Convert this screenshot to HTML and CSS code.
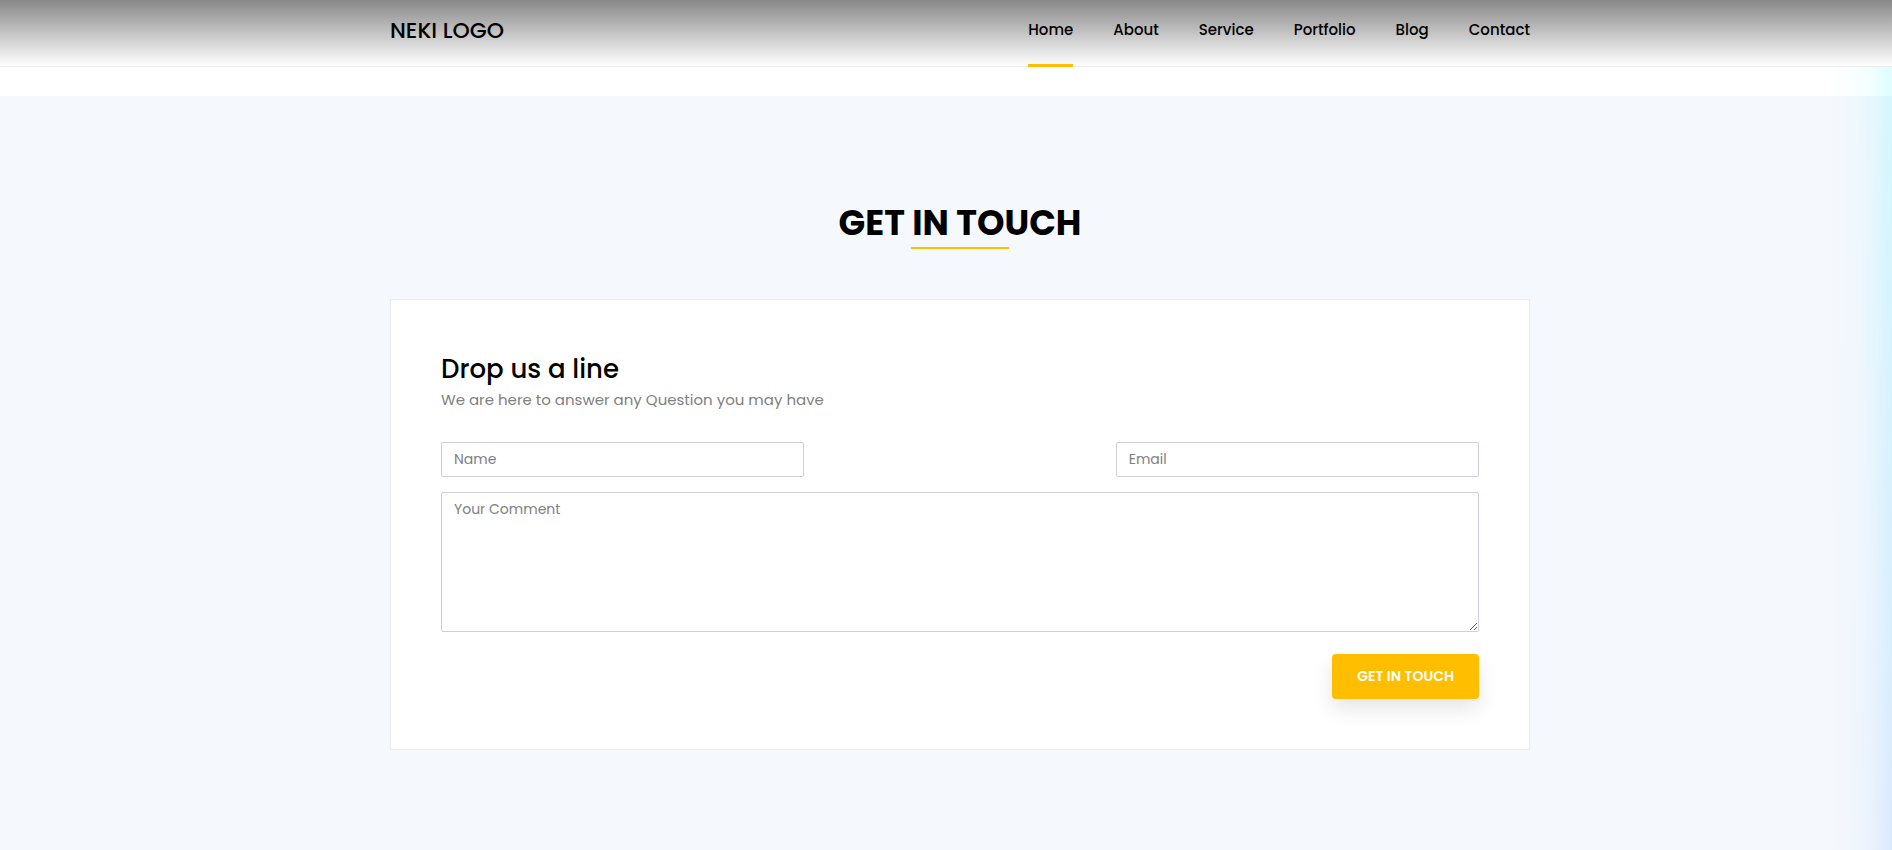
FILE: index.html
```html
<!DOCTYPE html>
<html lang="en">
<head>
<meta charset="utf-8">
<meta name="viewport" content="width=device-width, initial-scale=1">
<title>Neki Logo</title>
<link rel="stylesheet" href="styles.css">
</head>
<body>
<header class="header">
  <div class="container header-inner">
    <a class="logo" href="#">NEKI LOGO</a>
    <nav class="nav">
      <a class="nav-link active" href="#home">Home</a>
      <a class="nav-link" href="#about">About</a>
      <a class="nav-link" href="#service">Service</a>
      <a class="nav-link" href="#portfolio">Portfolio</a>
      <a class="nav-link" href="#blog">Blog</a>
      <a class="nav-link" href="#contact">Contact</a>
    </nav>
  </div>
</header>
<main class="contact" id="contact">
  <div class="container">
    <h1 class="title">GET IN TOUCH</h1>
    <form class="card">
      <h2 class="card-title">Drop us a line</h2>
      <p class="card-text">We are here to answer any Question you may have</p>
      <div class="row">
        <input class="field" type="text" placeholder="Name" aria-label="Name">
        <input class="field" type="email" placeholder="Email" aria-label="Email">
      </div>
      <textarea class="field comment" placeholder="Your Comment" aria-label="Your Comment"></textarea>
      <button class="submit" type="button">GET IN TOUCH</button>
    </form>
  </div>
</main>
<div class="glow"></div>
</body>
</html>
```
FILE: styles.css
```css
* {
  box-sizing: border-box;
}

body {
  margin: 0;
  min-height: 100vh;
  display: flex;
  flex-direction: column;
  position: relative;
  background: #fff;
  color: #000;
  font-family: Poppins, Inter, sans-serif;
  font-size: 15px;
  overflow-x: hidden;
}

.header,
.contact {
  padding-left: 28px;
}

.container {
  width: 100%;
  max-width: 1140px;
  margin: 0 auto;
}

.header {
  position: relative;
  z-index: 2;
  background: linear-gradient(#888, #fff);
  border-bottom: 1px solid #ebebeb;
}

.header-inner {
  display: flex;
  justify-content: space-between;
  height: 66px;
}

.logo {
  color: #000;
  font-size: 22px;
  font-weight: 500;
  line-height: 62px;
  text-decoration: none;
}

.nav {
  display: flex;
  gap: 40px;
}

.nav-link {
  height: 67px;
  color: #000;
  font-weight: 500;
  line-height: 60px;
  text-decoration: none;
}

.nav-link.active {
  border-bottom: 3px solid #ffbf00;
}

.contact {
  flex: 1;
  margin-top: 29px;
  padding-top: 102px;
  padding-bottom: 90px;
  background: #f5f8fd;
}

.title {
  margin: 0 0 50px;
  font-size: 35px;
  font-weight: 700;
  line-height: 49px;
  text-align: center;
}

.title::after {
  content: "";
  display: block;
  width: 98px;
  height: 2px;
  margin: 0 auto;
  background: #ffbf00;
}

.card {
  display: flex;
  flex-direction: column;
  padding: 50px;
  background: #fff;
  border: 1px solid #ebecef;
}

.card-title {
  margin: 0;
  font-size: 26px;
  font-weight: 500;
  line-height: 38px;
}

.card-text {
  margin: 0 0 30px;
  color: #808080;
  line-height: 24px;
}

.row {
  display: flex;
  justify-content: space-between;
  margin-bottom: 15px;
}

.field {
  width: 35%;
  height: 35px;
  padding: 6px 12px;
  background: #fff;
  border: 1px solid #ced1da;
  border-radius: 2px;
  font-family: inherit;
  font-size: 14px;
  line-height: 21px;
}

.field::placeholder {
  color: #808080;
}

.comment {
  width: 100%;
  height: 140px;
  margin-bottom: 22px;
}

.submit {
  align-self: flex-end;
  height: 45px;
  padding: 0 25px;
  background: #ffbf00;
  border: 0;
  border-radius: 4px;
  box-shadow: 0 10px 20px rgba(0, 0, 0, 0.1);
  color: #fff;
  font-family: inherit;
  font-size: 14px;
  font-weight: 600;
}

.glow {
  position: absolute;
  top: 0;
  right: 0;
  bottom: 0;
  width: 64px;
  background: linear-gradient(#00ffff, #20c0ff 60%, #4090ff);
  mask-image: linear-gradient(to left, rgba(0, 0, 0, 0.14), rgba(0, 0, 0, 0.06) 30%, rgba(0, 0, 0, 0.02) 60%, transparent);
  pointer-events: none;
}
```
